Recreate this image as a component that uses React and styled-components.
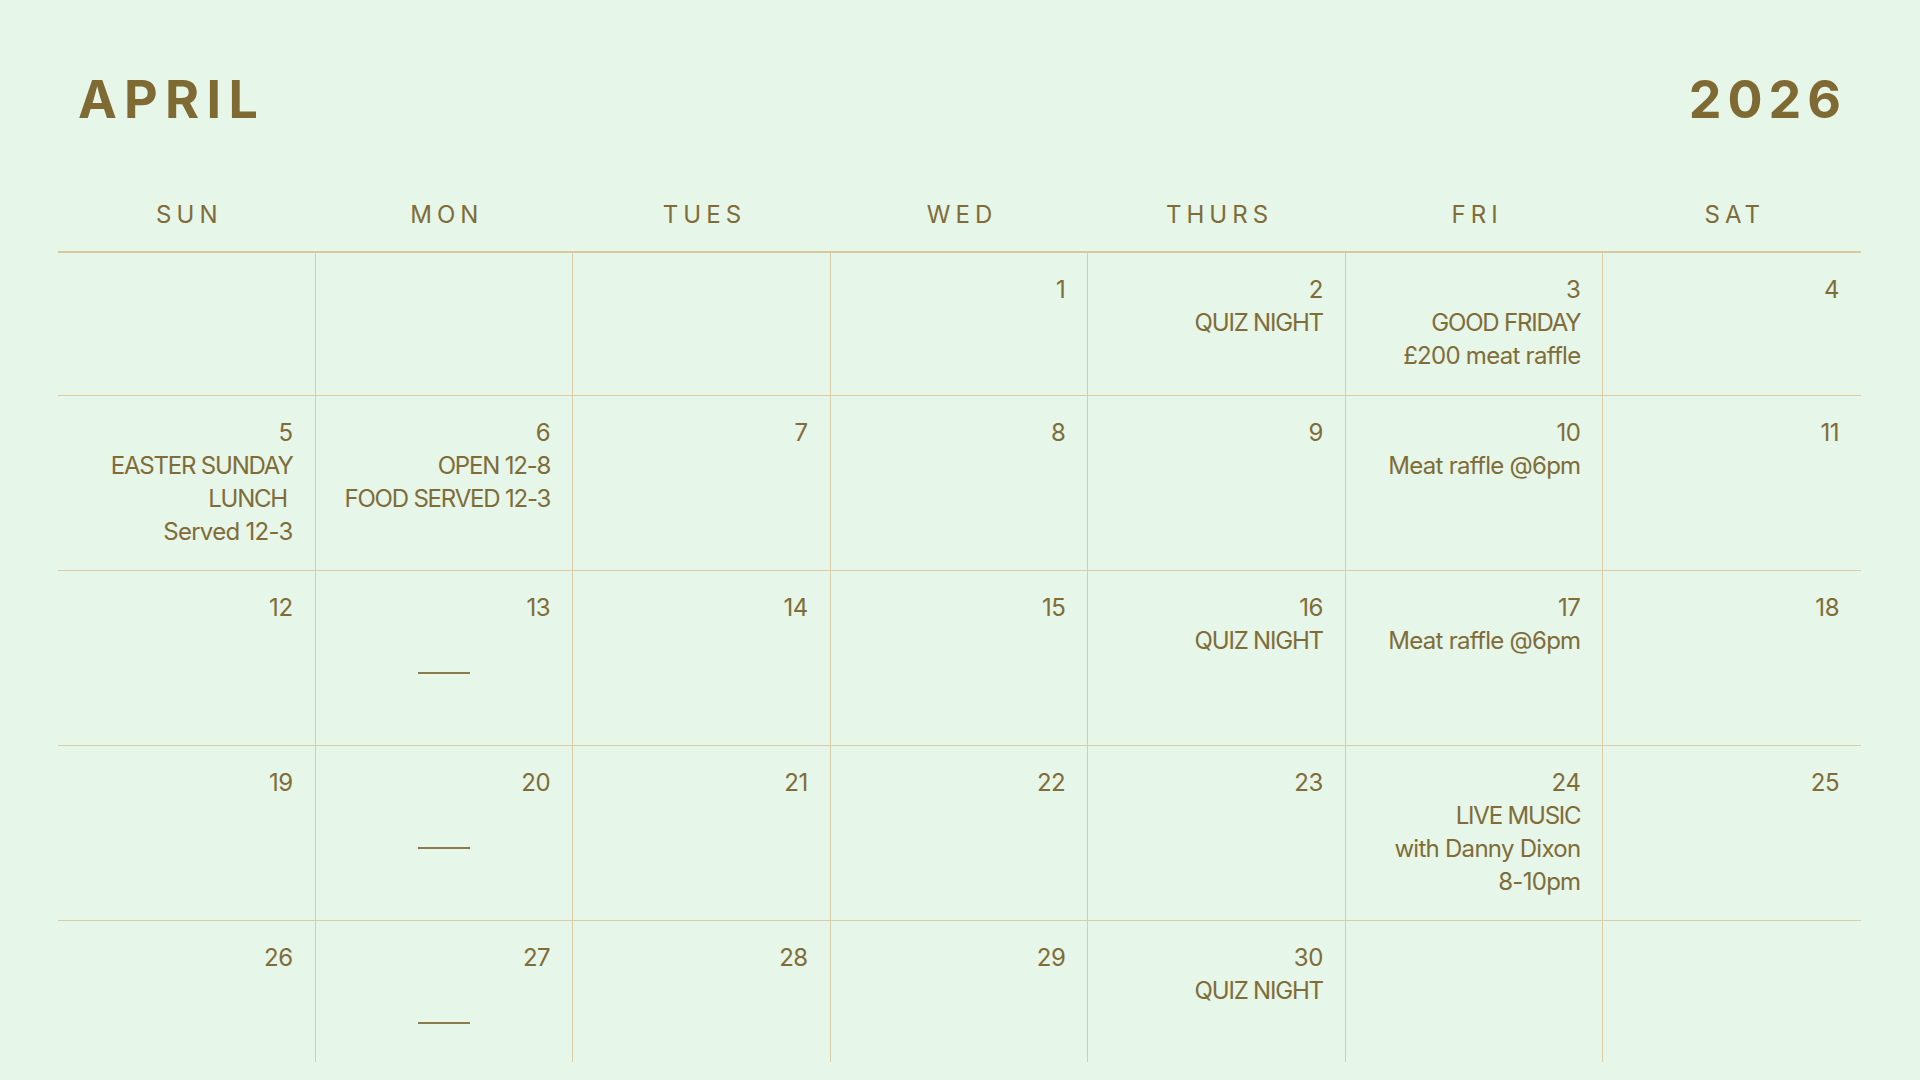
import React from 'react'
import styled, { createGlobalStyle } from 'styled-components'

const GlobalStyle = createGlobalStyle`
  html, body {
    margin: 0;
    padding: 0;
    background: #e6f6e8;
  }
  body {
    font-family: Inter, "Liberation Sans", sans-serif;
    color: #7f6c38;
  }
`

const weekdays = ['SUN', 'MON', 'TUES', 'WED', 'THURS', 'FRI', 'SAT']

// null = empty cell before/after month
const weeks = [
  [
    null,
    null,
    null,
    { day: 1 },
    { day: 2, lines: ['QUIZ NIGHT'] },
    { day: 3, lines: ['GOOD FRIDAY', '£200 meat raffle'] },
    { day: 4 }
  ],
  [
    { day: 5, lines: ['EASTER SUNDAY', 'LUNCH ', 'Served 12-3'] },
    { day: 6, lines: ['OPEN 12-8', 'FOOD SERVED 12-3'] },
    { day: 7 },
    { day: 8 },
    { day: 9 },
    { day: 10, lines: ['Meat raffle @6pm'] },
    { day: 11 }
  ],
  [
    { day: 12 },
    { day: 13, dash: true },
    { day: 14 },
    { day: 15 },
    { day: 16, lines: ['QUIZ NIGHT'] },
    { day: 17, lines: ['Meat raffle @6pm'] },
    { day: 18 }
  ],
  [
    { day: 19 },
    { day: 20, dash: true },
    { day: 21 },
    { day: 22 },
    { day: 23 },
    { day: 24, lines: ['LIVE MUSIC', 'with Danny Dixon', '8-10pm'] },
    { day: 25 }
  ],
  [
    { day: 26 },
    { day: 27, dash: true },
    { day: 28 },
    { day: 29 },
    { day: 30, lines: ['QUIZ NIGHT'] },
    null,
    null
  ]
]

const rowHeights = [143, 175, 175, 175, 141]

const Page = styled.div`
  width: 1920px;
  height: 1080px;
  box-sizing: border-box;
  padding: 74px 59px 0 58px;
  overflow: hidden;
`

const TitleRow = styled.header`
  display: flex;
  justify-content: space-between;
  align-items: center;
  padding: 0 14px 0 20px;
  height: 52px;
`

const Title = styled.h1`
  margin: 0;
  font-size: 52px;
  line-height: 52px;
  font-weight: 700;
  letter-spacing: ${p => (p.$wide ? '0.14em' : '0.115em')};
  color: #7f6a34;
`

const WeekdayRow = styled.div`
  display: grid;
  grid-template-columns: repeat(7, 1fr);
  margin-top: 74px;
  padding-bottom: 21px;
  border-bottom: 2px solid #d6c99c;
`

const Weekday = styled.div`
  text-align: center;
  font-size: 24px;
  line-height: 30px;
  font-weight: 400;
  letter-spacing: 0.21em;
  padding-left: 0.21em;
`

const Grid = styled.div`
  display: grid;
  grid-template-columns: repeat(7, 1fr);
  grid-template-rows: ${p => p.$rows.map(h => `${h}px`).join(' ')};
`

const Cell = styled.div`
  box-sizing: border-box;
  padding: 20px 22px 0 0;
  text-align: right;
  border-right: ${p => (p.$lastCol ? 'none' : '1px solid #d8cda4')};
  border-bottom: ${p => (p.$lastRow ? 'none' : '1px solid #d8cda4')};
  font-size: 24px;
  line-height: 33px;
  letter-spacing: -0.035em;
  white-space: pre;
`

const DayNum = styled.div`
  letter-spacing: -0.02em;
`

const EventLine = styled.div`
  letter-spacing: ${p => (p.$caps ? '-0.05em' : '-0.03em')};
`

const Dash = styled.div`
  width: 52px;
  height: 2px;
  margin: 48px auto 0;
  position: relative;
  left: 11px;
  background: #8a7b4c;
`

const isCaps = s => s === s.toUpperCase()

export default function App() {
  return (
    <>
      <GlobalStyle />
      <Page>
        <TitleRow>
          <Title $wide>APRIL</Title>
          <Title>2026</Title>
        </TitleRow>
        <WeekdayRow>
          {weekdays.map(d => (
            <Weekday key={d}>{d}</Weekday>
          ))}
        </WeekdayRow>
        <Grid $rows={rowHeights}>
          {weeks.map((week, r) =>
            week.map((cell, c) => (
              <Cell
                key={`${r}-${c}`}
                $lastCol={c === 6}
                $lastRow={r === weeks.length - 1}
              >
                {cell && <DayNum>{cell.day}</DayNum>}
                {cell?.lines?.map((l, i) => (
                  <EventLine key={i} $caps={isCaps(l)}>{l}</EventLine>
                ))}
                {cell?.dash && <Dash />}
              </Cell>
            ))
          )}
        </Grid>
      </Page>
    </>
  )
}
